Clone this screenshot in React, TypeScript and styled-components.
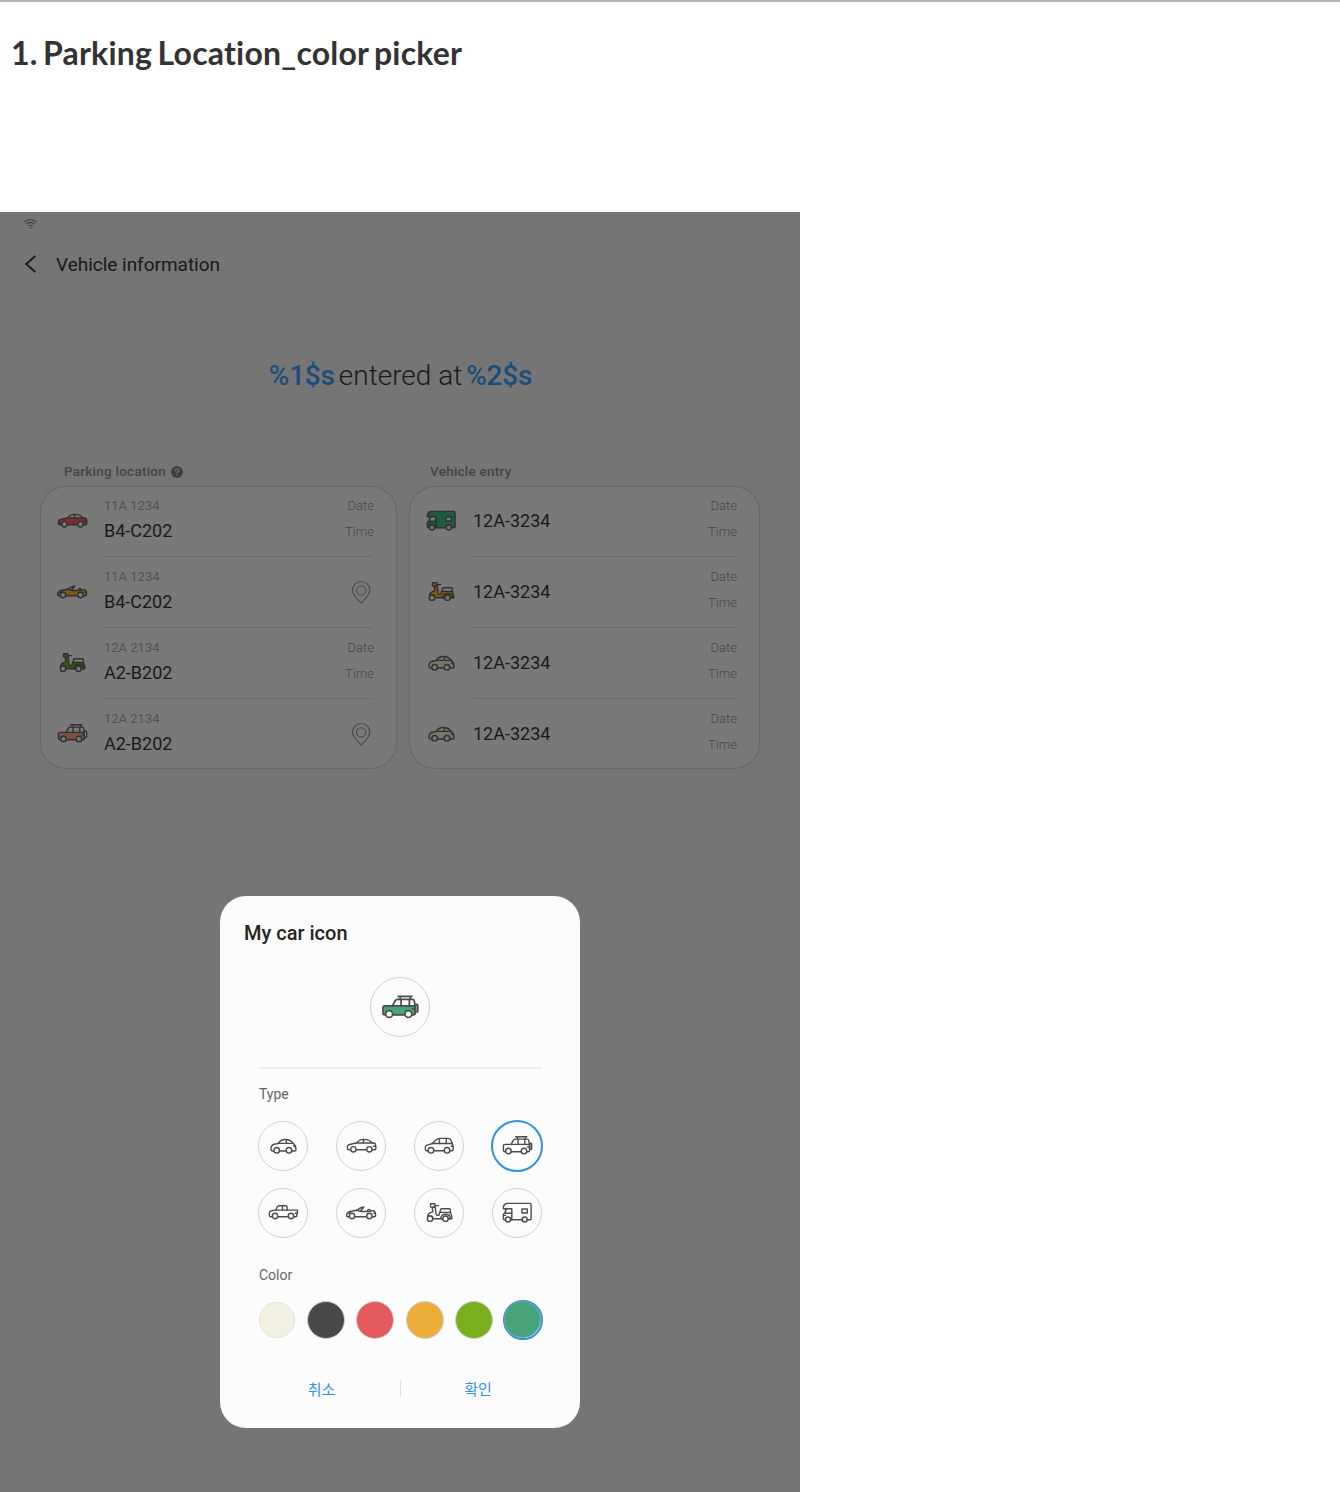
import React, { useState } from "react";
import styled, { createGlobalStyle } from "styled-components";

const GlobalStyle = createGlobalStyle`
  * { box-sizing: border-box; }
  body { margin: 0; background: #fff; font-family: Roboto, "Noto Sans CJK KR", sans-serif; }
`;

type VehicleType = "compact" | "sedan" | "hatchback" | "suv" | "pickup" | "convertible" | "scooter" | "camper";

const Page = styled.div`
  height: 1492px;
  overflow: hidden;
  border-top: 2px solid #b2b2b2;
  display: flex;
  flex-direction: column;
`;

const PageHeader = styled.header`
  height: 210px;
  flex: none;
  padding: 29px 0 0 11px;
`;

const PageTitle = styled.h1`
  margin: 0;
  font: 700 32px/44px Lato, "Open Sans", sans-serif;
  font-variant-ligatures: none;
  letter-spacing: 0.2px;
  word-spacing: -2.5px;
  color: #333;
  white-space: nowrap;
`;

const Screen = styled.main`
  position: relative;
  width: 800px;
  height: 1280px;
  background: #757575;
  flex: none;
`;

const StatusBar = styled.div`
  height: 24px;
  padding: 6px 0 0 23px;
  svg { display: block; }
`;

const AppBar = styled.div`
  height: 56px;
  display: flex;
  align-items: center;
  gap: 19px;
  padding-left: 24px;
`;

const AppTitle = styled.h2`
  margin: 0;
  font-size: 19px;
  font-weight: 400;
  letter-spacing: -0.02px;
  color: #191919;
`;

const Headline = styled.p`
  margin: 66px 0 0;
  height: 36px;
  display: flex;
  justify-content: center;
  gap: 4px;
  font-size: 28px;
  line-height: 36px;
  font-weight: 300;
  color: #191919;
  padding-left: 1px;
`;

const Slot = styled.b`
  font-weight: 500;
  letter-spacing: -0.2px;
  color: #1c4d78;
`;

const Columns = styled.div`
  display: flex;
  gap: 12px;
  padding: 66px 40px 0;
`;

const Column = styled.section<{ $width: number }>`
  width: ${(p) => p.$width}px;
`;

const ColumnTitle = styled.h3<{ $indent: number }>`
  margin: 0;
  height: 26px;
  display: flex;
  align-items: center;
  gap: 5px;
  padding: 0 0 4px ${(p) => p.$indent}px;
  font-size: 13.5px;
  font-weight: 500;
  letter-spacing: 0.24px;
  color: #454545;
  svg { margin-top: 2px; }
`;

const Card = styled.ul`
  list-style: none;
  margin: 0;
  padding: 0;
  height: 283px;
  background: #797979;
  border-radius: 26px;
  box-shadow: inset 0 0 0 1px #686868;
`;

const Row = styled.li<{ $right: number }>`
  height: 71px;
  display: flex;
  padding: 0 ${(p) => p.$right}px 0 15.7px;
`;

const IconCell = styled.div`
  width: 48.3px;
  padding-top: 23px;
  svg { display: block; }
`;

const RowBody = styled.div`
  flex: 1;
  height: 71px;
  display: flex;
  align-items: center;
  justify-content: space-between;
  border-bottom: 1px solid #6b6b6b;
  ${Row}:last-child & { border-color: transparent; }
`;

const Stack = styled.div<{ $end?: boolean }>`
  display: flex;
  flex-direction: column;
  align-items: ${(p) => (p.$end ? "flex-end" : "flex-start")};
  gap: ${(p) => (p.$end ? 6 : 3)}px;
  padding-bottom: ${(p) => (p.$end ? 4 : 3)}px;
  margin-right: ${(p) => (p.$end ? -1 : 0)}px;
`;

const Small = styled.span<{ $light?: boolean }>`
  font-size: 13px;
  line-height: 20px;
  font-weight: ${(p) => (p.$light ? 300 : 400)};
  color: ${(p) => (p.$light ? "#454545" : "#515151")};
`;

const Main = styled.span`
  font-size: 18px;
  line-height: 24px;
  color: #191919;
`;

const Dialog = styled.div`
  position: absolute;
  left: 220px;
  top: 684px;
  width: 360px;
  height: 532px;
  border-radius: 26px;
  background: #fcfcfc;
  padding: 24px 24px 0;
`;

const DialogTitle = styled.h2`
  margin: 0;
  font-size: 20px;
  line-height: 26px;
  font-weight: 500;
  color: #252525;
`;

const Preview = styled.div`
  width: 60px;
  height: 60px;
  margin: 31.4px auto 0;
  border: 1px solid #d2d2d2;
  border-radius: 50%;
  display: flex;
  align-items: center;
  justify-content: center;
`;

const Divider = styled.hr`
  width: 283px;
  height: 2px;
  margin: 29.6px 0 0 15px;
  border: 0;
  background: #eee;
`;

const Label = styled.div<{ $top: number }>`
  margin: ${(p) => p.$top}px 0 0 15px;
  font-size: 14px;
  line-height: 20px;
  color: #666;
`;

const TypeGrid = styled.div`
  margin: 15.7px 0 0 13px;
  display: grid;
  grid-template-columns: repeat(4, 52px);
  grid-auto-rows: 52px;
  column-gap: 26px;
  row-gap: 15px;
`;

const TypeButton = styled.button<{ $selected: boolean }>`
  margin: ${(p) => (p.$selected ? 0 : 1)}px;
  padding: 0;
  border: ${(p) => (p.$selected ? "2px solid #3392df" : "1px solid #d2d2d2")};
  border-radius: 50%;
  background: transparent;
  display: flex;
  align-items: center;
  justify-content: center;
`;

const Swatches = styled.div`
  margin: 15px 0 0 13px;
  display: flex;
  gap: 9.2px;
`;

const Swatch = styled.button<{ $selected: boolean }>`
  width: 40px;
  height: 40px;
  padding: 0;
  border: ${(p) => (p.$selected ? "2px solid #3392df" : "0")};
  border-radius: 50%;
  background: transparent;
  display: flex;
  align-items: center;
  justify-content: center;
`;

const Dot = styled.span<{ $color: string; $ring: string; $size: number }>`
  flex: none;
  width: ${(p) => p.$size}px;
  height: ${(p) => p.$size}px;
  border: 1px solid ${(p) => p.$ring};
  border-radius: 50%;
  background: ${(p) => p.$color};
`;

const Actions = styled.div`
  margin-top: 37.5px;
  display: flex;
  align-items: center;
  height: 24px;
`;

const Action = styled.button`
  flex: 1;
  padding: 0 0.5px 1px 0;
  border: 0;
  background: transparent;
  font: 400 15px/22px "Noto Sans CJK KR", sans-serif;
  color: #3392df;
`;

const Separator = styled.span`
  width: 1px;
  height: 16px;
  background: #ddd;
`;

interface IconProps {
  type: VehicleType;
  fill?: string;
  hole?: string;
  stroke?: string;
  scale?: number;
}

function VehicleIcon({ type, fill = "none", hole = "#fcfcfc", stroke = "#4c4c4c", scale = 1 }: IconProps) {
  const wheel = (x: number, y: number, r: number) => <circle cx={x} cy={y} r={r} fill={hole} />;
  const shapes: Record<VehicleType, React.ReactNode> = {
    compact: (
      <>
        <path fill={fill} d="M10 17H5.8Q4.2 17 4.2 15.3c0-3 1.500-5 4.600-5.300l3-.6h14.800c1.800 1.500 2.600 3.700 2.700 6q0 1.600-1.400 1.600z" />
        <path d="M11.600 9.400c1.700-2.600 3.800-3.900 6.600-3.900 4.200 0 6.800 1.400 8.200 3.900M19.700 5.600v3.800M27 12h1.500" />
        {wheel(10, 16.3, 2.8)}{wheel(22.3, 16.3, 2.8)}
      </>
    ),
    sedan: (
      <>
        <path fill={fill} d="M8.7 15.8H4.2q-1.500 0-1.500-1.400v-1.800q0-1.400 1.600-1.900l4.700-1.200 3-.5h16.400l1.900.2c.6 1.200.9 2.800.9 4.500q0 2.100-1.600 2.100z" />
        <path d="M11.600 9.100c2-2.300 4-3.700 7.100-3.700 4 0 7 1.200 8.900 3.700M18.800 5.500V9M28.800 12.200h1.800" />
        {wheel(8.7, 15.3, 2.7)}{wheel(24.7, 15.3, 2.7)}
      </>
    ),
    hatchback: (
      <>
        <path fill={fill} d="M8.3 16.8H4.1q-1.400 0-1.400-1.400v-2.300q0-1.500 1.700-2L10 9.500h19.400c.8 1.200 1.100 2.800 1.100 4.500v1.400q0 1.400-1.500 1.400z" />
        <path d="M9.800 9.500c2.500-3.400 4.700-5.100 8.200-5.100h7.800q1.500 0 2.300 1.500l1.500 3.700M16.700 4.600v4.900M23.600 4.400v5.100M28.600 12.200h1.700" />
        {wheel(8.3, 16.3, 2.8)}{wheel(24.3, 16.3, 2.8)}
      </>
    ),
    suv: (
      <>
        <path fill={fill} d="M7.7 17.7H4.1q-1.400 0-1.400-1.400v-4.200q0-1.700 1.700-1.700h24.500v5.800q0 1.500-1.500 1.500z" />
        <path d="M10.400 10.400l2.300-4.300q.5-1 1.600-1h12.200q1.300 0 1.500 1.300l.8 4M17.400 5.100v5.300M24.100 5.100v5.300M15 2.700h11.200M16.700 2.700v2.400M24.800 2.700v2.400M26.500 12.900h2.200" />
        <rect x="28.700" y="9.300" width="2.200" height="6" rx=".8" fill="#999" />
        {wheel(7.7, 17, 2.8)}{wheel(23.3, 17, 2.8)}
      </>
    ),
    pickup: (
      <>
        <path fill={fill} d="M8.3 15.8H4.1q-1.400 0-1.400-1.400v-2.300q0-2 2-2.300l4.300-.7h21.700v3.300l-.5.7v1.200q0 1.500-1.400 1.500z" />
        <path d="M9.200 9l1.200-2.900q.6-1.400 2-1.400h6.200q1.800 0 1.800 1.600V9M15.700 4.700V9M28.500 12.300h1.700" />
        {wheel(8.3, 15, 2.7)}{wheel(24.3, 15, 2.7)}
      </>
    ),
    convertible: (
      <>
        <path fill={fill} d="M7.300 15.700H3.200q-1.300 0-1.300-1.200 0-2.700 3.300-4l7-1.200 4.300 1.200h6.800l5.600-.9c1.500.8 2 2.200 2 4v.6q0 1.500-1.500 1.500z" />
        <path d="M12.200 9.300c2-1.800 4-3 6.900-3.300L15.900 10M22.700 10.400c.1-2.600 2.600-2.600 3.200-.5M4.100 11.700h1.400M29.100 12.300h1.200" />
        {wheel(7.3, 15, 2.7)}{wheel(24.7, 15, 2.7)}
      </>
    ),
    scooter: (
      <>
        <path fill={fill} d="M9.500 6.200h3l.9 7q.2 1.100 1.200 1.100h.9q1.200 0 1.200-1.200v-1.700h10.200c1.500 1.200 2.300 3.300 2.300 5.200v1.100H10.200c-.2-2.500-2-3.300-5.200-2.300.1-2 1.300-3.500 3.300-4.100l1.800-.5z" />
        <path fill={fill} d="M7.800 2.800h4.400v3.300H8.600q-.8 0-.8-.8z" />
        <path d="M12.500 4.600h3.300M5 17.400v-2" />
        <path fill={hole} d="M18.800 7.800h7.700q1.200 0 1.200 1v2.600H17.300L17.800 8.800q.1-1 1-1z" />
        <path fill={fill} d="M18 17.700c0-6 9.500-6 9.700 0z" />
        {wheel(7.3, 17.7, 2.7)}{wheel(22.8, 17.7, 2.7)}
      </>
    ),
    camper: (
      <>
        <path fill={fill} d="M7.3 18.800H3.600q-.9 0-.9-1v-4q0-1.200.8-1.500l.7-.2 1.200-4.300H2.700V5.500q1-3.100 4.100-3.100H29q1.400 0 1.400 1.400v13.600q0 1.400-1.400 1.400z" />
        <path fill={hole} d="M5.600 7.800h5.500v4.500H4.400z" />
        <path d="M11.100 12.300v6.500M3.200 14.400h1.600" />
        <rect x="21.200" y="8" width="5.400" height="4" fill={hole} />
        {wheel(7.3, 18.5, 2.5)}{wheel(24, 18.5, 2.5)}
      </>
    ),
  };
  return (
    <svg width={32 * scale} height={24 * scale} viewBox="0.3 0 32 24" fill="none" stroke={stroke} strokeWidth="1.4" strokeLinejoin="round" strokeLinecap="round">
      {shapes[type]}
    </svg>
  );
}

const WifiIcon = () => (
  <svg width="15" height="12" viewBox="0 0 15 12" fill="none" stroke="#404040" strokeWidth="1.1">
    <path d="M1.200 4.200C5 .8 10 .8 13.800 4.200M3.200 6.200c2.600-2.200 6-2.200 8.600 0M5.200 8.200c1.400-1.200 3.200-1.200 4.600 0" />
    <circle cx="7.500" cy="9.700" r=".8" fill="#303030" stroke="none" />
  </svg>
);

const BackIcon = () => (
  <svg width="13" height="18" viewBox="0 0 13 18" fill="none" stroke="#191919" strokeWidth="1.9">
    <path d="M11.400.9L2.200 9l9.200 8.100" />
  </svg>
);

const HelpIcon = () => (
  <svg width="12" height="12" viewBox="0 0 12 12">
    <circle cx="6" cy="6" r="6" fill="#404040" />
    <path d="M4.300 4.700C4.300 2.400 7.800 2.500 7.700 4.500 7.600 5.700 6 5.700 6 7.200M6 8.300v1.200" fill="none" stroke="#797979" strokeWidth="1.2" />
  </svg>
);

const PinIcon = () => (
  <svg width="24" height="24" viewBox="0 0 24 24" fill="none" stroke="#484848" strokeWidth="1.1">
    <path d="M12.200 23C8.700 19.400 3.500 14.900 3.500 10.200a8.700 8.700 0 0 1 17.400 0c0 4.700-5.200 9.200-8.700 12.800z" />
    <circle cx="12.200" cy="10.400" r="4.600" />
  </svg>
);

const dim = { hole: "#797979", stroke: "#303030" };

const parked: { type: VehicleType; fill: string; plate: string; spot: string; pin?: boolean }[] = [
  { type: "sedan", fill: "#802c2e", plate: "11A 1234", spot: "B4-C202" },
  { type: "convertible", fill: "#80580f", plate: "11A 1234", spot: "B4-C202", pin: true },
  { type: "scooter", fill: "#36570a", plate: "12A 2134", spot: "A2-B202" },
  { type: "suv", fill: "#7b5140", plate: "12A 2134", spot: "A2-B202", pin: true },
];

const entries: { type: VehicleType; fill: string }[] = [
  { type: "camper", fill: "#1f5a3e" },
  { type: "scooter", fill: "#80580f" },
  { type: "compact", fill: "#77756a" },
  { type: "compact", fill: "#77756a" },
];

const types: VehicleType[] = ["compact", "sedan", "hatchback", "suv", "pickup", "convertible", "scooter", "camper"];
const colors = ["#f2f0e1", "#494949", "#e55a5c", "#ebac38", "#7ab01e", "#47a378"];

const Timestamp = () => (
  <Stack $end>
    <Small $light>Date</Small>
    <Small $light>Time</Small>
  </Stack>
);

export default function App() {
  const [type, setType] = useState<VehicleType>("suv");
  const [color, setColor] = useState(colors[5]);

  return (
    <Page>
      <GlobalStyle />
      <PageHeader>
        <PageTitle>1. Parking Location_color picker</PageTitle>
      </PageHeader>
      <Screen>
        <StatusBar><WifiIcon /></StatusBar>
        <AppBar>
          <BackIcon />
          <AppTitle>Vehicle information</AppTitle>
        </AppBar>
        <Headline>
          <Slot>%1$s</Slot>
          <span>entered at</span>
          <Slot>%2$s</Slot>
        </Headline>
        <Columns>
          <Column $width={357}>
            <ColumnTitle $indent={24}>Parking location <HelpIcon /></ColumnTitle>
            <Card>
              {parked.map((v, i) => (
                <Row key={i} $right={24}>
                  <IconCell><VehicleIcon type={v.type} fill={v.fill} {...dim} /></IconCell>
                  <RowBody>
                    <Stack>
                      <Small>{v.plate}</Small>
                      <Main>{v.spot}</Main>
                    </Stack>
                    {v.pin ? <PinIcon /> : <Timestamp />}
                  </RowBody>
                </Row>
              ))}
            </Card>
          </Column>
          <Column $width={351}>
            <ColumnTitle $indent={21}>Vehicle entry</ColumnTitle>
            <Card>
              {entries.map((v, i) => (
                <Row key={i} $right={24}>
                  <IconCell><VehicleIcon type={v.type} fill={v.fill} {...dim} /></IconCell>
                  <RowBody>
                    <Main>12A-3234</Main>
                    <Timestamp />
                  </RowBody>
                </Row>
              ))}
            </Card>
          </Column>
        </Columns>
        <Dialog>
          <DialogTitle>My car icon</DialogTitle>
          <Preview><VehicleIcon type={type} fill={color} scale={1.235} /></Preview>
          <Divider />
          <Label $top={15}>Type</Label>
          <TypeGrid>
            {types.map((t) => (
              <TypeButton key={t} $selected={t === type} onClick={() => setType(t)}>
                <VehicleIcon type={t} />
              </TypeButton>
            ))}
          </TypeGrid>
          <Label $top={26.3}>Color</Label>
          <Swatches>
            {colors.map((c, i) => (
              <Swatch key={c} $selected={c === color} onClick={() => setColor(c)}>
                <Dot $color={c} $ring={i ? (c === color ? "#6fa9b0" : "#cfcfcf") : "#dfe6d3"} $size={i ? (c === color ? 37 : 38) : 36} />
              </Swatch>
            ))}
          </Swatches>
          <Actions>
            <Action>취소</Action>
            <Separator />
            <Action>확인</Action>
          </Actions>
        </Dialog>
      </Screen>
    </Page>
  );
}
